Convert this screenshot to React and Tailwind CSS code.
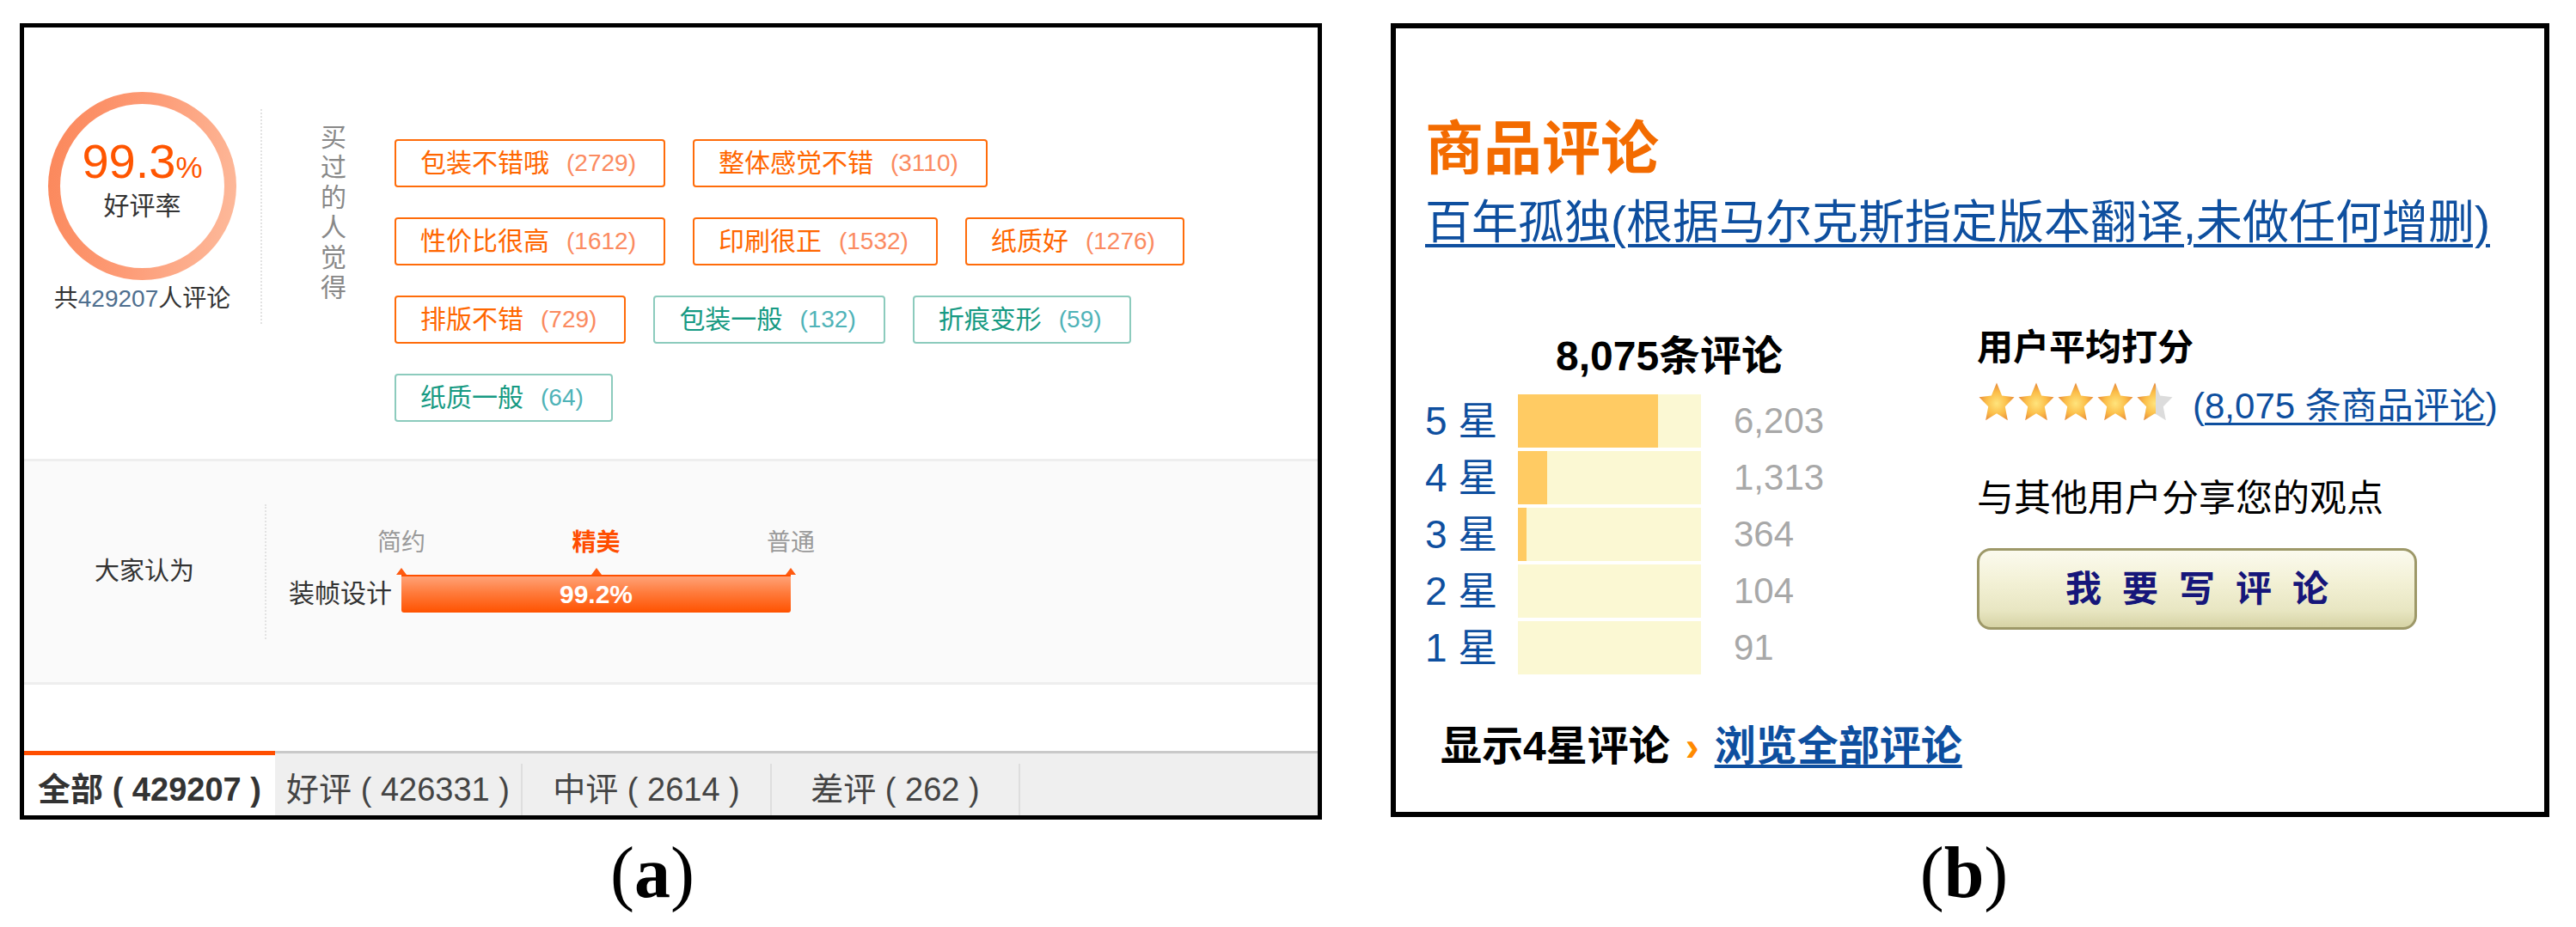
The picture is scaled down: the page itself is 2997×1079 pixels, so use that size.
import React from 'react';

const tagRows = [
  [
    { label: '包装不错哦', count: 2729, tone: 'hot' },
    { label: '整体感觉不错', count: 3110, tone: 'hot' },
  ],
  [
    { label: '性价比很高', count: 1612, tone: 'hot' },
    { label: '印刷很正', count: 1532, tone: 'hot' },
    { label: '纸质好', count: 1276, tone: 'hot' },
  ],
  [
    { label: '排版不错', count: 729, tone: 'hot' },
    { label: '包装一般', count: 132, tone: 'cool' },
    { label: '折痕变形', count: 59, tone: 'cool' },
  ],
  [{ label: '纸质一般', count: 64, tone: 'cool' }],
];

const starRows = [
  { star: 5, count: '6,203', fill: 163 },
  { star: 4, count: '1,313', fill: 34 },
  { star: 3, count: '364', fill: 10 },
  { star: 2, count: '104', fill: 0 },
  { star: 1, count: '91', fill: 0 },
];

const tabs = [
  { name: '好评', count: 426331, width: 'w-[288px]' },
  { name: '中评', count: 2614, width: 'w-[290px]' },
  { name: '差评', count: 262, width: 'w-[289px]' },
];

const STAR = 'M12 1.2l3.2 6.9 7.5.8-5.6 5.1 1.6 7.4L12 17.6l-6.7 3.8 1.6-7.4-5.6-5.1 7.5-.8z';

const ReviewTag = ({ label, count, tone }) => {
  const hot = tone === 'hot';
  return (
    <span
      className={`flex h-[56px] items-center rounded-[4px] border-2 pl-[28px] pr-[32px] ${
        hot ? 'border-[#ff6c0a] text-[#ff6600]' : 'border-[#8ccbbd] text-[#179a83]'
      }`}
    >
      <span className="text-[30px] leading-[30px]">{label}</span>
      <span className={`ml-[20px] text-[28px] leading-[28px] ${hot ? 'text-[#fb8a60]' : 'text-[#4fb3b8]'}`}>
        ({count})
      </span>
    </span>
  );
};

const RatingStar = ({ id, half }) => (
  <svg width="46" height="52" viewBox="0 0 24 24" preserveAspectRatio="none">
    <defs>
      <radialGradient id={`sg${id}`} cx="50%" cy="55%" r="55%">
        <stop offset="0%" stopColor="#ffe47c" />
        <stop offset="55%" stopColor="#fbbd48" />
        <stop offset="100%" stopColor="#e6873a" />
      </radialGradient>
      {half && (
        <clipPath id={`sc${id}`}>
          <rect x="0" y="0" width="12.5" height="24" />
        </clipPath>
      )}
    </defs>
    {half && <path d={STAR} fill="#dcdcdc" />}
    <path d={STAR} fill={`url(#sg${id})`} clipPath={half ? `url(#sc${id})` : undefined} />
  </svg>
);

const Caption = ({ letter, className }) => (
  <p className={`flex justify-center font-['Liberation_Serif',serif] text-[84px] leading-[84px] text-black ${className}`}>
    (<b>{letter}</b>)
  </p>
);

const TaobaoPanel = () => (
  <section className="flex h-[927px] flex-col border-[5px] border-black bg-white">
    {/* summary */}
    <div className="flex h-[502px] items-start">
      <div className="flex w-[275px] flex-col items-center pt-[75px]">
        <div className="h-[219px] w-[219px] rounded-full bg-[linear-gradient(100deg,#fb8659_0%,#fd9c77_50%,#fdbc9e_100%)] p-[14px]">
          <div className="flex h-full w-full flex-col items-center rounded-full bg-white pt-[39px]">
            <div className="flex items-baseline text-[#ff5500]">
              <span className="text-[56px] leading-[56px]">99.3</span>
              <span className="text-[35px] leading-[35px]">%</span>
            </div>
            <span className="mt-[9px] text-[30px] leading-[30px] text-[#333]">好评率</span>
          </div>
        </div>
        <p className="mt-[8px] text-[28px] leading-[28px] text-[#333]">
          共<span className="text-[#4f6f8f]">429207</span>人评论
        </p>
      </div>
      <div className="mt-[95px] h-[250px] border-l-2 border-dotted border-[#e2e2e2]" />
      <div className="ml-[68px] mt-[110px] flex w-[30px] flex-col text-[30px] leading-[35px] text-[#888]">
        {['买', '过', '的', '人', '觉', '得'].map((c) => (
          <span key={c}>{c}</span>
        ))}
      </div>
      <div className="ml-[56px] mt-[130px] flex flex-col gap-y-[35px]">
        {tagRows.map((row, i) => (
          <div key={i} className="flex gap-x-[32px]">
            {row.map((t) => (
              <ReviewTag key={t.label} {...t} />
            ))}
          </div>
        ))}
      </div>
    </div>

    {/* impression */}
    <div className="flex h-[263px] items-center border-y-[3px] border-[#eeeeee] bg-[#fafafa]">
      <div className="flex w-[280px] justify-center text-[29px] leading-[29px] text-[#333]">大家认为</div>
      <div className="h-[157px] border-l-2 border-dotted border-[#e2e2e2]" />
      <div className="ml-[26px] flex flex-col">
        <div className="ml-[103px] flex w-[509px] justify-between text-[28px] leading-[28px] text-[#9a9a9a]">
          <span>简约</span>
          <span className="font-bold text-[#ff4d00]">精美</span>
          <span>普通</span>
        </div>
        <div className="ml-[125px] mt-[15px] flex w-[465px] justify-between">
          {[0, 1, 2].map((i) => (
            <span key={i} className="h-0 w-0 border-x-[6px] border-b-[8px] border-x-transparent border-b-[#ff5a10]" />
          ))}
        </div>
        <div className="flex items-center">
          <span className="w-[131px] text-[30px] leading-[30px] text-[#333]">装帧设计</span>
          <div className="flex h-[44px] w-[453px] items-center justify-center rounded-b-[3px] border-t-2 border-[#ff5000] bg-[linear-gradient(to_bottom,#ffa277,#ff7b3c_45%,#ff5200)] text-[30px] font-bold leading-[30px] text-white">
            99.2%
          </div>
        </div>
      </div>
    </div>

    <div className="h-[77px]" />

    {/* tabs */}
    <div className="flex h-[75px] bg-[#efefef]">
      <div className="flex w-[292px] justify-center border-t-[5px] border-[#ff4e00] bg-white pt-[21px] text-[38px] font-bold leading-[38px] text-[#333]">
        全部 ( 429207 )
      </div>
      {tabs.map((t) => (
        <div key={t.name} className={`flex ${t.width} border-t-[3px] border-[#c9c9c9]`}>
          <span className="flex-1 pt-[23px] text-center text-[38px] leading-[38px] text-[#444]">
            {t.name} ( {t.count} )
          </span>
          <span className="mt-[12px] w-[2px] bg-[#dedede]" />
        </div>
      ))}
      <div className="flex-1 border-t-[3px] border-[#c9c9c9]" />
    </div>
  </section>
);

const AmazonPanel = () => (
  <section className="flex h-[924px] flex-col border-[6px] border-black bg-white">
    <h2 className="ml-[34px] mt-[106px] text-[68px] font-bold leading-[68px] text-[#f36b00]">商品评论</h2>
    <a className="ml-[34px] mt-[25px] self-start text-[54px] leading-[54px] text-[#0e4f9f] underline decoration-[4px] underline-offset-[6px]">
      百年孤独(根据马尔克斯指定版本翻译,未做任何增删)
    </a>

    <div className="mt-[98px] flex pl-[34px]">
      {/* histogram */}
      <div className="flex w-[642px] flex-col pt-[7px]">
        <p className="ml-[152px] text-[48px] font-bold leading-[48px] text-black">8,075条评论</p>
        <div className="mt-[20px] flex flex-col gap-[4px]">
          {starRows.map((r) => (
            <div key={r.star} className="flex h-[62px] items-center">
              <span className="w-[108px] text-[46px] leading-[46px] text-[#0e4f9f]">{r.star} 星</span>
              <div className="flex h-full w-[213px] bg-[#fbf8d3]">
                <div className="h-full bg-[#ffcb63]" style={{ width: r.fill }} />
              </div>
              <span className="ml-[38px] text-[42px] leading-[42px] text-[#a8a8a8]">{r.count}</span>
            </div>
          ))}
        </div>
      </div>

      {/* average */}
      <div className="flex flex-col">
        <p className="text-[42px] font-bold leading-[42px] text-black">用户平均打分</p>
        <div className="mt-[17px] flex items-start">
          <div className="flex">
            {[0, 1, 2, 3, 4].map((i) => (
              <RatingStar key={i} id={i} half={i === 4} />
            ))}
          </div>
          <span className="ml-[21px] mt-[9px] text-[42px] leading-[42px] text-[#0e4f9f]">
            (<a className="underline decoration-[3px] underline-offset-[5px]">8,075 条商品评论</a>)
          </span>
        </div>
        <p className="mt-[64px] text-[43px] leading-[43px] text-black">与其他用户分享您的观点</p>
        <button className="mt-[36px] flex h-[95px] w-[512px] items-center justify-center rounded-[16px] border-[3px] border-[#9d9868] bg-[linear-gradient(to_bottom,#fbfaee_0%,#f3f1d6_40%,#e8e6c2_78%,#d6d3a5_100%)] pl-[24px] text-[42px] font-bold leading-[42px] tracking-[24px] text-[#16167a]">
          我要写评论
        </button>
      </div>
    </div>

    <div className="ml-[52px] mt-[60px] flex items-center text-[48px] font-bold leading-[48px]">
      <span className="text-black">显示4星评论</span>
      <span className="mx-[18px] text-[#ff8a00]">›</span>
      <a className="text-[#0e4f9f] underline decoration-[4px] underline-offset-[5px]">浏览全部评论</a>
    </div>
  </section>
);

export default function App() {
  return (
    <div className="flex h-[1079px] w-[2997px] bg-white pt-[27px] font-['Liberation_Sans','Noto_Sans_CJK_SC',sans-serif]">
      <div className="ml-[23px] flex w-[1515px] flex-col">
        <TaobaoPanel />
        <Caption letter="a" className="mt-[20px] pr-[43px]" />
      </div>
      <div className="ml-[80px] flex w-[1348px] flex-col">
        <AmazonPanel />
        <Caption letter="b" className="mt-[23px] pr-[14px]" />
      </div>
    </div>
  );
}
